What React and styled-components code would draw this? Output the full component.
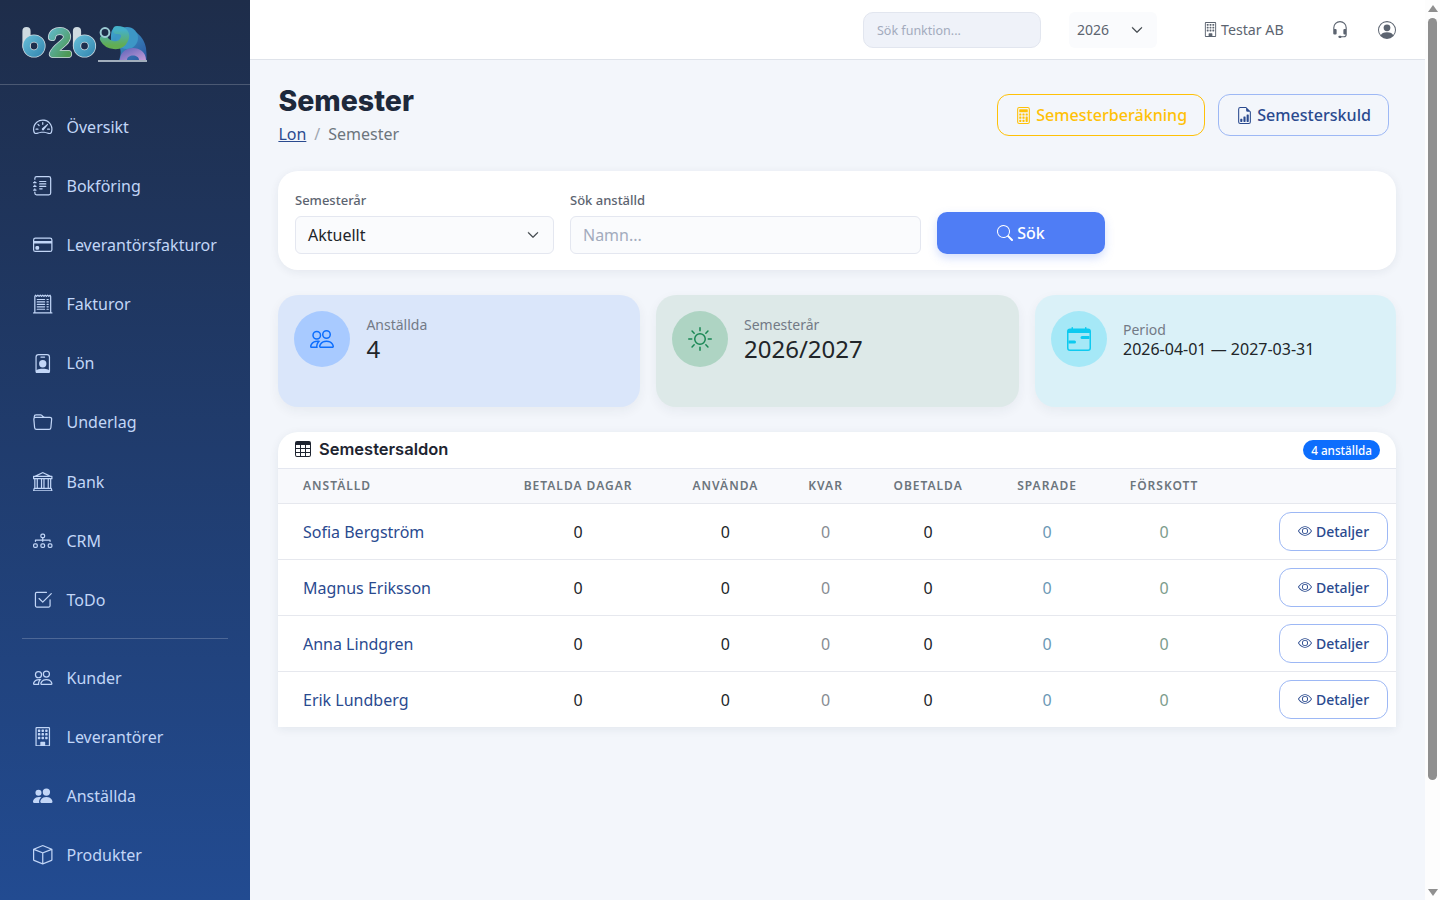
import React from 'react';
import styled, { createGlobalStyle } from 'styled-components';
import {
  BsSpeedometer2, BsJournalText, BsCreditCard, BsReceiptCutoff, BsPersonBadge, BsFolder, BsBank, BsDiagram3,
  BsCheck2Square, BsPeople, BsBuilding, BsPeopleFill, BsBox, BsHeadset, BsPersonCircle, BsCalculator,
  BsFileEarmarkBarGraph, BsSearch, BsSun, BsCalendarRange, BsTable, BsEye, BsChevronDown,
} from 'react-icons/bs';

const GlobalStyle = createGlobalStyle`
  * { box-sizing: border-box; }
  html, body { margin: 0; padding: 0; }
  body {
    background: #f3f6fb;
    color: #212529;
    font-family: "Noto Sans", "Open Sans", sans-serif;
    font-size: 16px;
  }
`;

const navTop = [
  ['Översikt', BsSpeedometer2],
  ['Bokföring', BsJournalText],
  ['Leverantörsfakturor', BsCreditCard],
  ['Fakturor', BsReceiptCutoff],
  ['Lön', BsPersonBadge],
  ['Underlag', BsFolder],
  ['Bank', BsBank],
  ['CRM', BsDiagram3],
  ['ToDo', BsCheck2Square],
];

const navBottom = [
  ['Kunder', BsPeople],
  ['Leverantörer', BsBuilding],
  ['Anställda', BsPeopleFill],
  ['Produkter', BsBox],
];

const employees = ['Sofia Bergström', 'Magnus Eriksson', 'Anna Lindgren', 'Erik Lundberg'];

const Logo = () => (
  <svg width="127" height="37" viewBox="0 0 127 37">
    <defs>
      <linearGradient id="lgB" x1="0" y1="0" x2="1" y2="1">
        <stop offset="0" stopColor="#5fb6d2" />
        <stop offset="1" stopColor="#3a8db5" />
      </linearGradient>
      <linearGradient id="lgTwo" x1="0" y1="0" x2="1" y2="1">
        <stop offset="0" stopColor="#5fb5bd" />
        <stop offset="1" stopColor="#4f9a55" />
      </linearGradient>
      <linearGradient id="lgHead" x1="0" y1="0" x2="0" y2="1">
        <stop offset="0" stopColor="#45b0c8" />
        <stop offset="1" stopColor="#62ad52" />
      </linearGradient>
      <linearGradient id="lgBody" x1="0" y1="0" x2="1" y2="1">
        <stop offset="0" stopColor="#3fa9cf" />
        <stop offset="1" stopColor="#2c55a0" />
      </linearGradient>
      <linearGradient id="lgLeg" x1="0" y1="0" x2="1" y2="1">
        <stop offset="0" stopColor="#5a62b8" />
        <stop offset="1" stopColor="#c39ad6" />
      </linearGradient>
    </defs>
    <g fill="none" strokeLinecap="round" strokeLinejoin="round">
      <g stroke="#cfdae0" strokeWidth="8.2">
        <path d="M4.5 5V20" />
        <circle cx="12" cy="20" r="7.5" />
        <path d="M30 11c1-8 15-8 15 0 0 6-11 9-14 17h15" />
        <path d="M55 5V20" />
        <circle cx="62.5" cy="20" r="7.5" />
      </g>
      <g strokeWidth="6.6">
        <path d="M4.5 5V20" stroke="url(#lgB)" />
        <circle cx="12" cy="20" r="7.5" stroke="url(#lgB)" />
        <path d="M30 11c1-8 15-8 15 0 0 6-11 9-14 17h15" stroke="url(#lgTwo)" />
        <path d="M55 5V20" stroke="url(#lgB)" />
        <circle cx="62.5" cy="20" r="7.5" stroke="url(#lgB)" />
      </g>
    </g>
    <path d="M76 35H125" stroke="#cfdae0" strokeWidth="1.4" />
    <path d="M92 2C108-1 122 8 124 22c.6 4 .6 8 .6 12H97c2-5 2-9 1-12-6 0-9-4-9-8 0-6 0-10 3-12z" fill="url(#lgBody)" />
    <circle cx="105" cy="12" r="11" fill="#3d97c6" />
    <path d="M98 34c0-16 26-16 26 0h-7c0-6-12-6-12 0z" fill="url(#lgLeg)" />
    <path d="M82 13c4 7 16 9 20 1 3-6 0-10-7-10" fill="none" stroke="url(#lgHead)" strokeWidth="8" strokeLinecap="round" />
    <circle cx="83" cy="6.5" r="4.4" fill="#1e2d4a" stroke="#9ccbd4" strokeWidth="2" />
  </svg>
);

const App = () => (
  <Shell>
    <GlobalStyle />
    <Sidebar>
      <Brand><Logo /></Brand>
      <Nav>
        {navTop.map(([label, Icon]) => (
          <NavItem key={label}><Icon />{label}</NavItem>
        ))}
        <NavDivider />
        {navBottom.map(([label, Icon]) => (
          <NavItem key={label}><Icon />{label}</NavItem>
        ))}
      </Nav>
    </Sidebar>
    <Main>
      <Topbar>
        <TopSearch placeholder="Sök funktion..." readOnly />
        <YearSelect>2026<BsChevronDown /></YearSelect>
        <Company><BsBuilding />Testar AB</Company>
        <TopIcon><BsHeadset /></TopIcon>
        <TopIcon $wide><BsPersonCircle /></TopIcon>
      </Topbar>
      <Content>
        <PageHeader>
          <div>
            <Title>Semester</Title>
            <Crumbs>
              <CrumbLink href="#">Lon</CrumbLink>
              <CrumbSep>/</CrumbSep>
              <span>Semester</span>
            </Crumbs>
          </div>
          <HeaderActions>
            <OutlineButton $color="#ffc107" $border="#ffc107"><BsCalculator />Semesterberäkning</OutlineButton>
            <OutlineButton $color="#2a4a8f" $border="#9db8f5"><BsFileEarmarkBarGraph />Semesterskuld</OutlineButton>
          </HeaderActions>
        </PageHeader>

        <FilterCard>
          <Field $width="259px">
            <FieldLabel>Semesterår</FieldLabel>
            <SelectBox>Aktuellt<BsChevronDown /></SelectBox>
          </Field>
          <Field $width="351px">
            <FieldLabel>Sök anställd</FieldLabel>
            <TextInput placeholder="Namn..." readOnly />
          </Field>
          <SearchButton><BsSearch />Sök</SearchButton>
        </FilterCard>

        <Stats>
          <StatCard $bg="#dae6fa">
            <StatIcon $bg="#a8caff" $color="#0d6efd"><BsPeople /></StatIcon>
            <div>
              <StatLabel>Anställda</StatLabel>
              <StatValue>4</StatValue>
            </div>
          </StatCard>
          <StatCard $bg="#dde9e8">
            <StatIcon $bg="#aed4c3" $color="#198754"><BsSun /></StatIcon>
            <div>
              <StatLabel>Semesterår</StatLabel>
              <StatValue>2026/2027</StatValue>
            </div>
          </StatCard>
          <StatCard $bg="#daf1f8">
            <StatIcon $bg="#a5e8f7" $color="#0dcaf0"><BsCalendarRange /></StatIcon>
            <PeriodText>
              <StatLabel>Period</StatLabel>
              <PeriodValue>2026-04-01 — 2027-03-31</PeriodValue>
            </PeriodText>
          </StatCard>
        </Stats>

        <TableCard>
          <TableHead>
            <TableTitle><BsTable />Semestersaldon</TableTitle>
            <CountBadge>4 anställda</CountBadge>
          </TableHead>
          <Table>
            <colgroup>
              <col width="221.2" />
              <col width="157" />
              <col width="137.5" />
              <col width="63" />
              <col width="142" />
              <col width="96" />
              <col width="138" />
              <col />
            </colgroup>
            <thead>
              <tr>
                <Th $left>Anställd</Th>
                <Th>Betalda dagar</Th>
                <Th>Använda</Th>
                <Th>Kvar</Th>
                <Th>Obetalda</Th>
                <Th>Sparade</Th>
                <Th>Förskott</Th>
                <Th />
              </tr>
            </thead>
            <tbody>
              {employees.map((name) => (
                <tr key={name}>
                  <NameCell>{name}</NameCell>
                  <Td>0</Td>
                  <Td>0</Td>
                  <Td $color="#878c92">0</Td>
                  <Td>0</Td>
                  <Td $color="#6b98b5">0</Td>
                  <Td $color="#7c9c8c">0</Td>
                  <ActionCell>
                    <DetailButton><BsEye />Detaljer</DetailButton>
                  </ActionCell>
                </tr>
              ))}
            </tbody>
          </Table>
        </TableCard>
      </Content>
    </Main>
    <ScrollRail>
      <ArrowUp />
      <ScrollThumb />
      <ArrowDown />
    </ScrollRail>
  </Shell>
);

const Shell = styled.div`
  display: flex;
  height: 100vh;
  overflow: hidden;
`;

const Sidebar = styled.aside`
  flex: 0 0 250px;
  overflow: hidden;
  background: linear-gradient(180deg, #1e2d4a 0%, #224b91 100%);
`;

const Brand = styled.div`
  height: 85px;
  padding: 26px 0 0 22px;
  border-bottom: 1px solid rgba(255, 255, 255, 0.2);
`;

const Nav = styled.nav`
  padding-top: 12.2px;
`;

const NavItem = styled.a`
  display: flex;
  align-items: center;
  gap: 14px;
  height: 59.15px;
  padding-left: 33px;
  color: #c2d6f7;
  font-size: 16px;

  svg {
    width: 19.5px;
    height: 19.5px;
    flex: none;
  }
`;

const NavDivider = styled.div`
  height: 1px;
  margin: 8.5px 22px 9px;
  background: rgba(255, 255, 255, 0.2);
`;

const Main = styled.main`
  flex: 1;
  min-width: 0;
  overflow: hidden;
`;

const ScrollRail = styled.div`
  display: flex;
  flex-direction: column;
  align-items: center;
  flex: 0 0 15px;
  padding: 5px 0 4px;
  background: #fdfdfd;
`;

const ScrollThumb = styled.div`
  width: 9px;
  height: 762px;
  margin-top: 6px;
  background: #8f8f8f;
  border-radius: 5px;
`;

const ArrowUp = styled.div`
  width: 0;
  height: 0;
  border-left: 5px solid transparent;
  border-right: 5px solid transparent;
  border-bottom: 7px solid #8f8f8f;
`;

const ArrowDown = styled(ArrowUp)`
  margin-top: auto;
  border-bottom: 0;
  border-top: 7px solid #8f8f8f;
`;

const Topbar = styled.header`
  display: flex;
  align-items: center;
  height: 60px;
  padding-left: 613px;
  background: #fff;
  border-bottom: 1px solid #dfe3ea;
`;

const TopSearch = styled.input`
  flex: none;
  width: 178px;
  height: 36px;
  padding: 1px 13px 0;
  background: #eff2f9;
  border: 1px solid #e2e6ef;
  border-radius: 10px;
  font: 12.5px "Noto Sans", sans-serif;
  outline: none;

  &::placeholder {
    color: #a3abbd;
  }
`;

const YearSelect = styled.div`
  display: flex;
  align-items: center;
  justify-content: space-between;
  flex: none;
  width: 88px;
  height: 36px;
  margin-left: 28px;
  padding: 0 14px 0 8px;
  background: #fafbfd;
  border-radius: 6px;
  color: #5c6470;
  font-size: 14px;

  svg {
    width: 12px;
    height: 12px;
    color: #343a40;
    stroke: currentColor;
    stroke-width: 0.8;
  }
`;

const Company = styled.div`
  display: flex;
  align-items: center;
  gap: 3px;
  flex: none;
  margin-left: 46px;
  color: #5c6470;
  font-size: 14.2px;

  svg {
    width: 15px;
    height: 15px;
  }
`;

const TopIcon = styled.div`
  display: flex;
  flex: none;
  margin-left: ${(p) => (p.$wide ? '29px' : '47px')};
  color: #5c6470;

  svg {
    width: 18px;
    height: 18px;
  }
`;

const Content = styled.div`
  padding: 24px 29px 0 28.4px;
`;

const PageHeader = styled.div`
  display: flex;
  justify-content: space-between;
  height: 87px;
`;

const Title = styled.h1`
  margin: 0;
  color: #1e293b;
  font-family: Inter, sans-serif;
  font-size: 28.5px;
  font-weight: 800;
  line-height: 34px;
`;

const Crumbs = styled.div`
  display: flex;
  gap: 8px;
  margin-top: 4px;
  color: #6c757d;
  font-size: 16px;
  line-height: 24px;
`;

const CrumbLink = styled.a`
  color: #2a4a8f;
  text-decoration: underline;
`;

const CrumbSep = styled.span`
  color: #a0a7b1;
`;

const HeaderActions = styled.div`
  display: flex;
  gap: 13px;
  margin: 10px 7px 0 0;
  height: 42px;
`;

const OutlineButton = styled.button`
  display: flex;
  align-items: center;
  gap: 4px;
  padding: 0 17px;
  background: transparent;
  border: 1px solid ${(p) => p.$border};
  border-radius: 12px;
  color: ${(p) => p.$color};
  font: 500 16.1px "Noto Sans", sans-serif;

  svg {
    width: 17px;
    height: 17px;
  }
`;

const FilterCard = styled.section`
  display: flex;
  align-items: flex-end;
  gap: 16px;
  height: 99px;
  padding: 0 16.6px 16px;
  background: #fff;
  border-radius: 20px;
  box-shadow: 0 2px 10px rgba(30, 45, 74, 0.07);
`;

const Field = styled.div`
  width: ${(p) => p.$width};
`;

const FieldLabel = styled.div`
  margin-bottom: 6px;
  color: #5c6470;
  font-size: 13px;
  font-weight: 500;
  line-height: 20px;
`;

const SelectBox = styled.div`
  display: flex;
  align-items: center;
  justify-content: space-between;
  height: 38px;
  padding: 0 14px 0 12px;
  background: #fafbfd;
  border: 1px solid #e4e7f0;
  border-radius: 6px;
  color: #212529;
  font-size: 16px;

  svg {
    width: 12px;
    height: 12px;
    color: #343a40;
    stroke: currentColor;
    stroke-width: 0.8;
  }
`;

const TextInput = styled.input`
  display: block;
  width: 100%;
  height: 38px;
  padding: 0 12px;
  background: #fafbfd;
  border: 1px solid #e4e7f0;
  border-radius: 6px;
  font: 16px "Noto Sans", sans-serif;
  outline: none;

  &::placeholder {
    color: #a3abbd;
  }
`;

const SearchButton = styled.button`
  display: flex;
  align-items: center;
  justify-content: center;
  gap: 4px;
  width: 168px;
  height: 42px;
  background: #4f7df5;
  border: 0;
  border-radius: 10px;
  box-shadow: 0 4px 10px rgba(79, 125, 245, 0.25);
  color: #fff;
  font: 500 16px "Noto Sans", sans-serif;

  svg {
    width: 16px;
    height: 16px;
  }
`;

const Stats = styled.div`
  display: grid;
  grid-template-columns: 361.6px 363px 361px;
  gap: 16px;
  margin-top: 25px;
`;

const StatCard = styled.div`
  display: flex;
  align-items: flex-start;
  gap: 16px;
  height: 112px;
  padding: 16px;
  background: ${(p) => p.$bg};
  border-radius: 20px;
  box-shadow: 0 4px 12px rgba(30, 45, 74, 0.06);
`;

const StatIcon = styled.div`
  display: flex;
  align-items: center;
  justify-content: center;
  flex: none;
  width: 56px;
  height: 56px;
  border-radius: 50%;
  background: ${(p) => p.$bg};
  color: ${(p) => p.$color};

  svg {
    width: 24px;
    height: 24px;
  }
`;

const StatLabel = styled.div`
  color: #737a86;
  font-size: 14px;
  line-height: 20px;
  margin-top: 4px;
`;

const StatValue = styled.div`
  color: #212529;
  font-size: 24px;
  line-height: 28px;
`;

const PeriodText = styled.div`
  padding-top: 5px;
`;

const PeriodValue = styled.div`
  color: #212529;
  font-size: 16px;
  line-height: 18px;
`;

const TableCard = styled.section`
  margin-top: 25px;
  background: #fff;
  border-radius: 20px 20px 0 0;
  box-shadow: 0 2px 10px rgba(30, 45, 74, 0.08);
  overflow: hidden;
`;

const TableHead = styled.div`
  display: flex;
  align-items: center;
  justify-content: space-between;
  height: 37px;
  padding: 0 16px 0 16.6px;
  border-bottom: 1px solid #e4e7f0;
`;

const TableTitle = styled.div`
  display: flex;
  align-items: center;
  gap: 8px;
  padding-bottom: 2px;
  color: #1e2430;
  font-family: Inter, sans-serif;
  font-size: 16.5px;
  font-weight: 600;

  svg {
    width: 16px;
    height: 16px;
  }
`;

const CountBadge = styled.span`
  padding: 0 8px;
  background: #0d6efd;
  border-radius: 10px;
  color: #fff;
  font-size: 11.7px;
  font-weight: 500;
  line-height: 20px;
`;

const Table = styled.table`
  width: 100%;
  table-layout: fixed;
  border-collapse: collapse;
`;

const Th = styled.th`
  height: 34px;
  padding: ${(p) => (p.$left ? '0 0 0 24.6px' : '0')};
  background: #f8f9fc;
  border-bottom: 1px solid #e6e8ee;
  color: #6c757d;
  font-size: 12px;
  font-weight: 600;
  letter-spacing: 1px;
  text-align: ${(p) => (p.$left ? 'left' : 'center')};
  text-transform: uppercase;
`;

const Td = styled.td`
  height: 56px;
  padding-top: 3px;
  border-bottom: 1px solid #e6e8ee;
  color: ${(p) => p.$color || '#212529'};
  font-size: 16px;
  text-align: center;

  tr:last-child & {
    border-bottom: 0;
  }
`;

const NameCell = styled(Td)`
  padding-left: 24.6px;
  color: #2a4a8f;
  text-align: left;
`;

const ActionCell = styled(Td)`
  padding: 0 8px 0 0;
  text-align: right;
`;

const DetailButton = styled.button`
  display: inline-flex;
  align-items: center;
  justify-content: center;
  gap: 4px;
  width: 109px;
  height: 39px;
  background: #fff;
  border: 1px solid #9db8f5;
  border-radius: 12px;
  color: #2a4a8f;
  font: 500 14px "Noto Sans", sans-serif;

  svg {
    width: 14px;
    height: 14px;
  }
`;

export default App;
